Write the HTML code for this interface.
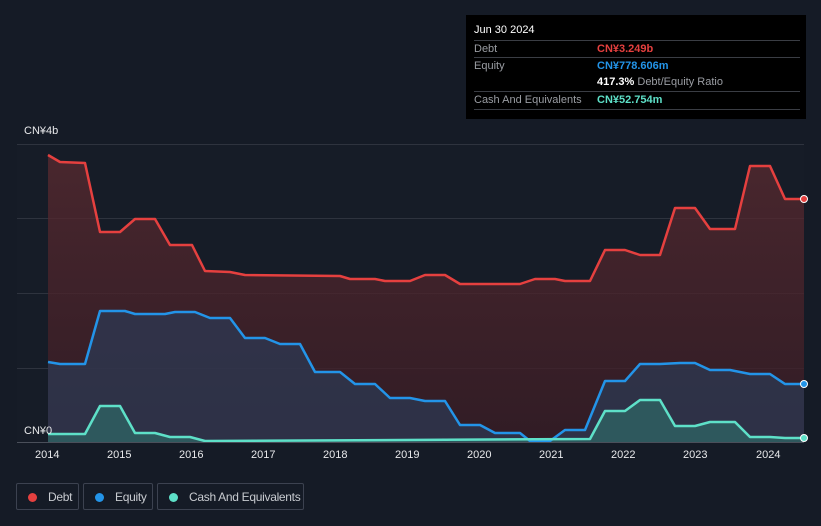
<!DOCTYPE html>
<html><head><meta charset="utf-8"><style>
html,body{margin:0;width:821px;height:526px;overflow:hidden}
body{background:#151b26;font-family:"Liberation Sans",sans-serif;position:relative}
.tt{position:absolute;left:466px;top:15px;width:340px;height:104px;background:#000;color:#fff;font-size:11px}
.tt .r{position:absolute;left:8px;right:6px;border-top:1px solid #3a3d44;height:17px;line-height:17px;color:#9a9da3}
.leg{position:absolute;top:483px;height:27px;border:1px solid #3c4250;border-radius:2px;color:#c8cbd0;font-size:12px;letter-spacing:-0.3px;line-height:26px;box-sizing:border-box;white-space:nowrap;overflow:hidden}
.leg i{display:inline-block;width:9px;height:9px;border-radius:50%;margin:0 11px 0 11px;vertical-align:-1px}
.ax{position:absolute;top:449px;color:#e8e9eb;font-size:11px}
</style></head><body>
<svg width="821" height="526" style="position:absolute;left:0;top:0">
<defs>
<linearGradient id="gd" x1="0" y1="0" x2="0" y2="1"><stop offset="0" stop-color="#5a2a30" stop-opacity=".75"/><stop offset="1" stop-color="#3a1c24" stop-opacity=".75"/></linearGradient>
</defs>
<rect x="17" y="144" width="787" height="298" fill="#161c27"/>
<g stroke="#2e333e" stroke-width="1">
<line x1="17" y1="144.5" x2="804" y2="144.5"/><line x1="17" y1="218.5" x2="804" y2="218.5"/><line x1="17" y1="293.5" x2="804" y2="293.5"/><line x1="17" y1="368.5" x2="804" y2="368.5"/>
</g>
<path d="M48,155 L60,162 L85,163 L100,232 L120,232 L135,219 L155,219 L170,245 L192,245 L205,271 L230,272 L245,275 L340,276 L350,279 L375,279 L385,281 L410,281 L425,275 L445,275 L460,284 L520,284 L535,279 L555,279 L565,281 L590,281 L605,250 L625,250 L640,255 L660,255 L675,208 L695,208 L710,229 L735,229 L750,166 L770,166 L785,199 L804,199 L804,442 L48,442Z" fill="url(#gd)"/>
<path d="M48,362 L60,364 L85,364 L100,311 L125,311 L135,314 L165,314 L175,312 L195,312 L210,318 L230,318 L245,338 L265,338 L280,344 L300,344 L315,372 L340,372 L355,384 L375,384 L390,398 L410,398 L425,401 L445,401 L460,425 L480,425 L495,433 L520,433 L530,441 L550,441 L565,430 L585,430 L605,381 L625,381 L640,364 L660,364 L680,363 L695,363 L710,370 L730,370 L750,374 L770,374 L785,384 L804,384 L804,442 L48,442Z" fill="#2c3a55" fill-opacity=".7"/>
<path d="M48,434 L85,434 L100,406 L120,406 L135,433 L155,433 L170,437 L190,437 L205,441 L590,439 L605,411 L625,411 L640,400 L660,400 L675,426 L695,426 L710,422 L735,422 L750,437 L770,437 L785,438 L804,438 L804,442 L48,442Z" fill="#2f6a66" fill-opacity=".7"/>
<path d="M48,155 L60,162 L85,163 L100,232 L120,232 L135,219 L155,219 L170,245 L192,245 L205,271 L230,272 L245,275 L340,276 L350,279 L375,279 L385,281 L410,281 L425,275 L445,275 L460,284 L520,284 L535,279 L555,279 L565,281 L590,281 L605,250 L625,250 L640,255 L660,255 L675,208 L695,208 L710,229 L735,229 L750,166 L770,166 L785,199 L804,199" fill="none" stroke="#e5403f" stroke-width="2.5" stroke-linejoin="round"/>
<path d="M48,362 L60,364 L85,364 L100,311 L125,311 L135,314 L165,314 L175,312 L195,312 L210,318 L230,318 L245,338 L265,338 L280,344 L300,344 L315,372 L340,372 L355,384 L375,384 L390,398 L410,398 L425,401 L445,401 L460,425 L480,425 L495,433 L520,433 L530,441 L550,441 L565,430 L585,430 L605,381 L625,381 L640,364 L660,364 L680,363 L695,363 L710,370 L730,370 L750,374 L770,374 L785,384 L804,384" fill="none" stroke="#2394e8" stroke-width="2.5" stroke-linejoin="round"/>
<path d="M48,434 L85,434 L100,406 L120,406 L135,433 L155,433 L170,437 L190,437 L205,441 L590,439 L605,411 L625,411 L640,400 L660,400 L675,426 L695,426 L710,422 L735,422 L750,437 L770,437 L785,438 L804,438" fill="none" stroke="#5ee0c8" stroke-width="2.5" stroke-linejoin="round"/>
<line x1="17" y1="442.5" x2="804" y2="442.5" stroke="#4a4f5a"/>
<circle cx="804" cy="199" r="3.5" fill="#e5403f" stroke="#fff" stroke-width="1"/>
<circle cx="804" cy="384" r="3.5" fill="#2394e8" stroke="#fff" stroke-width="1"/>
<circle cx="804" cy="438" r="3.5" fill="#5ee0c8" stroke="#fff" stroke-width="1"/>
</svg>
<div style="position:absolute;left:24px;top:125px;color:#e8e9eb;font-size:11px">CN¥4b</div>
<div style="position:absolute;left:24px;top:425px;color:#e8e9eb;font-size:11px">CN¥0</div>
<div class="ax" style="left:35px">2014</div><div class="ax" style="left:107px">2015</div><div class="ax" style="left:179px">2016</div><div class="ax" style="left:251px">2017</div><div class="ax" style="left:323px">2018</div><div class="ax" style="left:395px">2019</div><div class="ax" style="left:467px">2020</div><div class="ax" style="left:539px">2021</div><div class="ax" style="left:611px">2022</div><div class="ax" style="left:683px">2023</div><div class="ax" style="left:756px">2024</div>
<div class="tt">
<div style="position:absolute;left:8px;top:9px;font-size:11px">Jun 30 2024</div>
<div class="r" style="top:25px">Debt<span style="position:absolute;left:123px;color:#e5403f;font-weight:bold">CN¥3.249b</span></div>
<div class="r" style="top:42px">Equity<span style="position:absolute;left:123px;color:#2394e8;font-weight:bold">CN¥778.606m</span></div>
<div class="r" style="top:59px;border-top:none"><span style="position:absolute;left:123px"><b style="color:#fff">417.3%</b> Debt/Equity Ratio</span></div>
<div class="r" style="top:76px">Cash And Equivalents<span style="position:absolute;left:123px;color:#5ee0c8;font-weight:bold">CN¥52.754m</span></div>
<div style="position:absolute;left:8px;right:6px;top:94px;border-top:1px solid #3a3d44"></div>
</div>
<div class="leg" style="left:16px;width:63px"><i style="background:#e5403f"></i>Debt</div>
<div class="leg" style="left:83px;width:70px"><i style="background:#2394e8"></i>Equity</div>
<div class="leg" style="left:157px;width:147px"><i style="background:#5ee0c8"></i>Cash And Equivalents</div>
</body></html>
